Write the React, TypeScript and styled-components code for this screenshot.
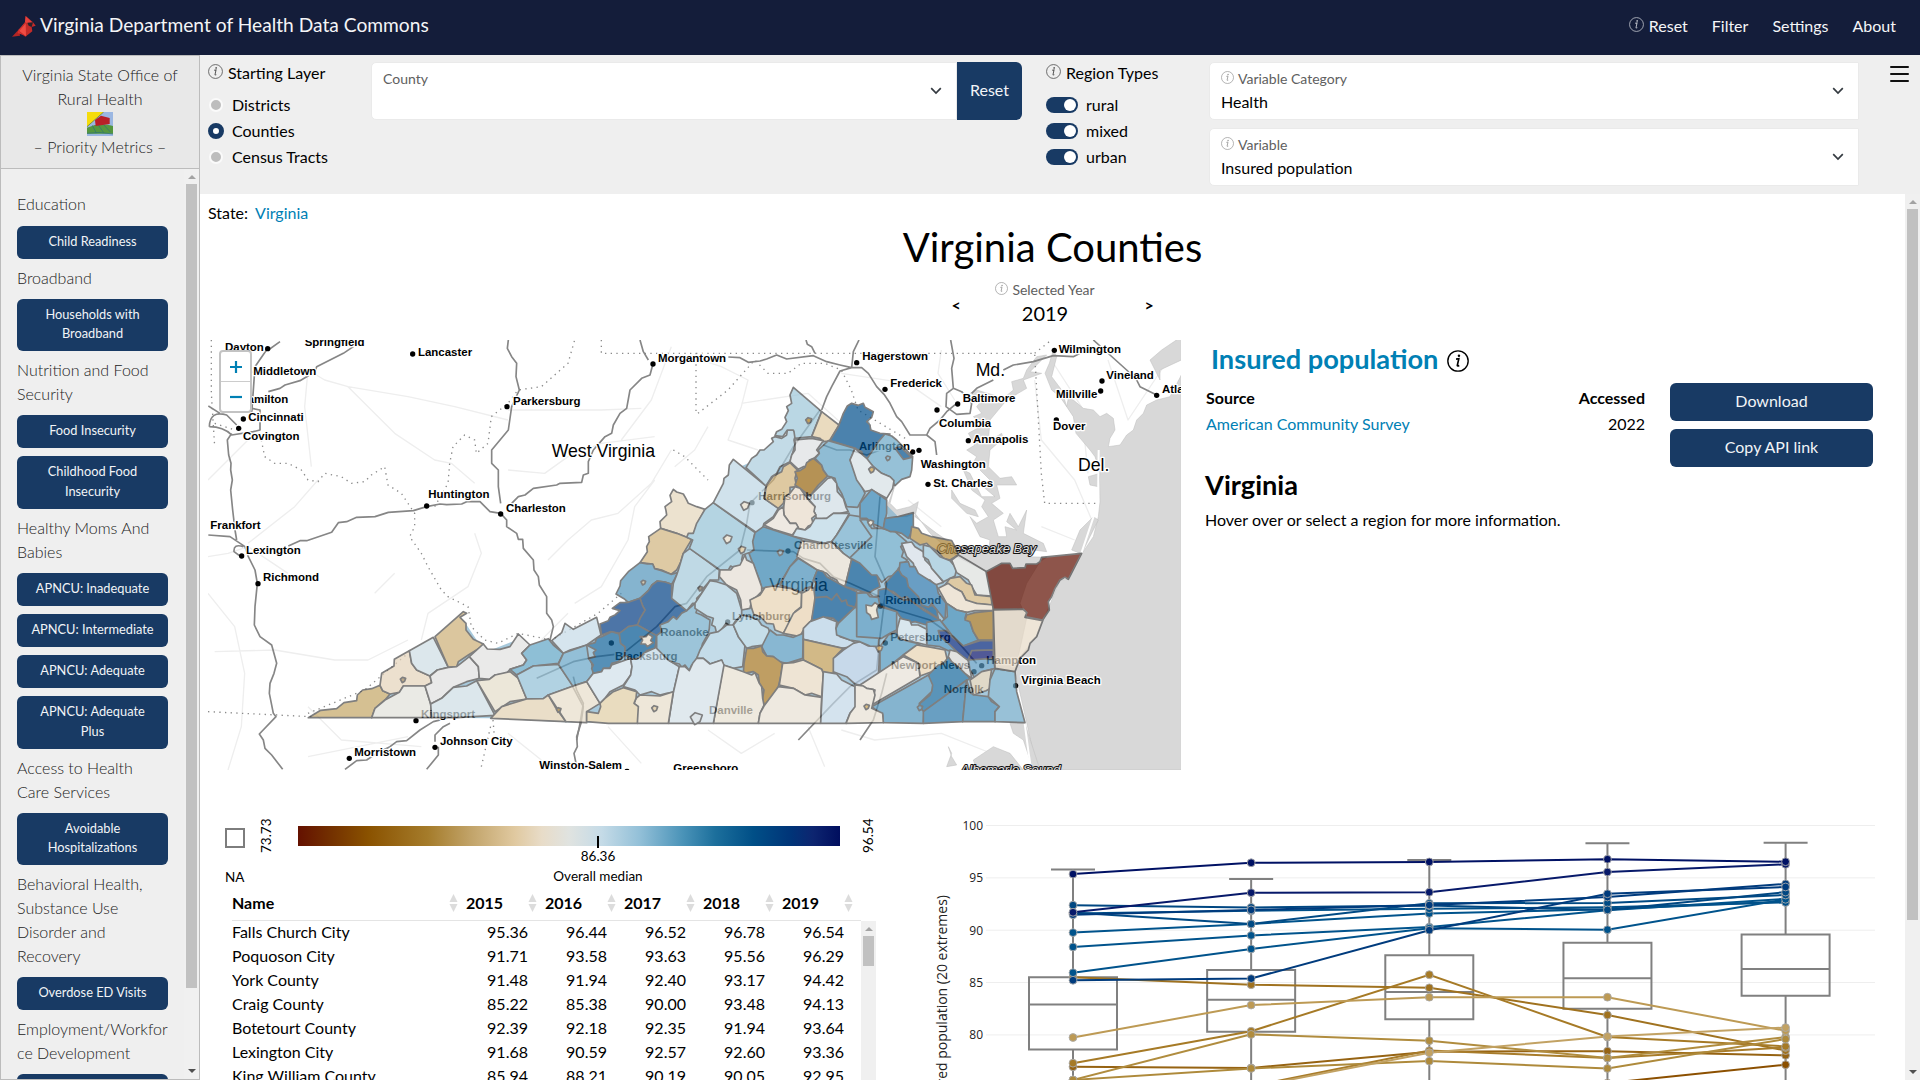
import React from "react";
import styled, { createGlobalStyle, css } from "styled-components";

const NAVY = "#141d3a";
const BLUE = "#183a64";
const LINK = "#0080b4";
const PANEL = "#efefef";

const GlobalStyle = createGlobalStyle`
  * { box-sizing: border-box; }
  html, body { margin: 0; padding: 0; height: 1080px; overflow: hidden; background: #fff; }
  body { font-family: Lato, "Liberation Sans", sans-serif; font-size: 16px; line-height: 24px; color: #000; }
`;

const Page = styled.div`
  display: flex;
  flex-direction: column;
  width: 1920px;
  height: 1080px;
  overflow: hidden;
`;

/* ---------- top bar ---------- */
const TopBar = styled.header`
  display: flex;
  align-items: center;
  justify-content: space-between;
  flex: none;
  height: 55px;
  padding: 0 24px 6px 11px;
  background: ${NAVY};
  color: #f4f5f7;
`;
const Brand = styled.div`
  display: flex;
  align-items: center;
  gap: 4px;
  font-size: 19.2px;
  svg { margin-top: 2px; }
`;
const Nav = styled.nav`
  display: flex;
  align-items: center;
  gap: 24px;
  padding-top: 2px;
`;
const NavItem = styled.span`
  display: flex;
  align-items: center;
  gap: 5px;
`;

/* ---------- sidebar ---------- */
const Columns = styled.div`
  display: flex;
  flex: 1;
  min-height: 0;
`;
const Sidebar = styled.aside`
  display: flex;
  flex-direction: column;
  flex: none;
  width: 200px;
  border: 1px solid #bcbcbc;
  background: ${PANEL};
`;
const SideTitle = styled.div`
  display: flex;
  flex-direction: column;
  align-items: center;
  flex: none;
  height: 113px;
  padding-top: 7px;
  border-bottom: 1px solid #bcbcbc;
  background: #e8e8e8;
  font-weight: 300;
  text-align: center;
  color: #222;
  svg { margin: 1px 0 -1px; }
`;
const SideBody = styled.div`
  display: flex;
  flex: 1;
  min-height: 0;
`;
const MetricList = styled.div`
  display: flex;
  flex-direction: column;
  flex: 1;
  gap: 8px;
  min-height: 0;
  overflow: hidden;
  padding: 24.6px 17px 0 16px;
`;
const MetricHeading = styled.div`
  flex: none;
  width: 151px;
  margin: -1.2px 0 1.2px;
  font-weight: 300;
  color: #222;
  overflow-wrap: anywhere;
`;
const MetricButton = styled.button`
  flex: none;
  width: 151px;
  padding: 6px 12px 8px;
  border: 0;
  border-radius: 6px;
  background: ${BLUE};
  color: #f1f4f7;
  font: 400 12.8px/19.2px Lato, sans-serif;
  text-align: center;
`;

/* ---------- scrollbar ---------- */
const Track = styled.div`
  display: flex;
  flex-direction: column;
  align-items: center;
  justify-content: space-between;
  flex: none;
  width: 15px;
  background: #f0f0f0;
`;
const Thumb = styled.div<{ $h: number }>`
  width: 11px;
  height: ${(p) => p.$h}px;
  background: #c1c1c1;
`;
const ThumbStack = styled.div`
  display: flex;
  flex-direction: column;
  align-items: center;
`;
const Arrow = styled.i<{ $down?: boolean }>`
  width: 0;
  height: 0;
  margin: ${(p) => (p.$down ? "0 0 6px" : "6px 0 5px")};
  border: 4px solid transparent;
  ${(p) =>
    p.$down
      ? css`border-top-color: #505050; border-bottom: 0;`
      : css`border-bottom-color: #a3a3a3; border-top: 0;`}
`;
function Scrollbar({ thumb, down = true }: { thumb: number; down?: boolean }) {
  return (
    <Track>
      <ThumbStack>
        <Arrow />
        <Thumb $h={thumb} />
      </ThumbStack>
      {down && <Arrow $down />}
    </Track>
  );
}

/* ---------- filter bar ---------- */
const Main = styled.main`
  display: flex;
  flex-direction: column;
  flex: 1;
  min-width: 0;
`;
const FilterBar = styled.section`
  display: flex;
  align-items: flex-start;
  flex: none;
  height: 139px;
  padding: 7px 11px 0 8px;
  background: ${PANEL};
`;
const OptionGroup = styled.div<{ $w: number }>`
  display: flex;
  flex-direction: column;
  gap: 2px;
  width: ${(p) => p.$w}px;
  margin-top: -1px;
`;
const GroupLabel = styled.div`
  display: flex;
  align-items: center;
  gap: 5px;
  height: 24px;
  margin-bottom: 6px;
`;
const OptionRow = styled.div`
  display: flex;
  align-items: center;
  gap: 8px;
  height: 24px;
`;
const Radio = styled.span<{ $on?: boolean }>`
  width: 16px;
  height: 16px;
  border-radius: 50%;
  border: ${(p) => (p.$on ? `5px solid ${BLUE}` : "3px solid #fafafa")};
  background: ${(p) => (p.$on ? "#fff" : "#bdbdbd")};
  ${(p) => !p.$on && css`width: 14px; height: 14px; border-width: 2px; margin: 0 1px;`}
`;
const Switch = styled.span`
  display: flex;
  align-items: center;
  justify-content: flex-end;
  width: 32px;
  height: 16px;
  padding-right: 2px;
  border-radius: 8px;
  background: ${BLUE};
  &::after {
    content: "";
    width: 12px;
    height: 12px;
    border-radius: 50%;
    background: #fff;
  }
`;
const SelectBox = styled.div<{ $w: number }>`
  display: flex;
  align-items: center;
  justify-content: space-between;
  width: ${(p) => p.$w}px;
  height: 58px;
  padding: 0 14px 0 11px;
  border: 1px solid #eaeaea;
  border-radius: 5px 0 0 5px;
  background: #fff;
`;
const SelectText = styled.div`
  display: flex;
  flex-direction: column;
  height: 46px;
`;
const SelectLabel = styled.div`
  display: flex;
  align-items: center;
  gap: 4px;
  height: 22px;
  font-size: 14px;
  color: #606060;
`;
const ResetButton = styled.button`
  width: 65px;
  height: 58px;
  padding: 0 0 3px;
  border: 0;
  border-radius: 0 6px 6px 0;
  background: ${BLUE};
  color: #f1f4f7;
  font: 400 16px Lato, sans-serif;
  margin-right: 24px;
`;
const SelectStack = styled.div`
  display: flex;
  flex-direction: column;
  gap: 8px;
  flex: 1;
`;
const MenuButton = styled.div`
  display: flex;
  flex-direction: column;
  gap: 5px;
  margin-top: 4px;
  span { width: 19px; height: 2px; background: #111; border-radius: 1px; }
`;

/* ---------- content ---------- */
const ContentRow = styled.div`
  display: flex;
  flex: 1;
  min-height: 0;
`;
const Content = styled.div`
  display: flex;
  flex-direction: column;
  flex: 1;
  min-width: 0;
  overflow: hidden;
  padding: 7px 32px 0 8px;
`;
const Crumb = styled.div`
  display: flex;
  gap: 7px;
  a { color: ${LINK}; }
`;
const Title = styled.h1`
  margin: -1px 0 1px;
  height: 46px;
  padding-left: 24px;
  font: 400 40px/46px Lato, sans-serif;
  text-align: center;
`;
const YearPicker = styled.div`
  display: flex;
  align-items: center;
  justify-content: center;
  height: 69px;
  padding-left: 24px;
  b { font-weight: 700; font-size: 16px; padding-bottom: 1px; width: 9px; text-align: center; }
`;
const YearValue = styled.div`
  display: flex;
  flex-direction: column;
  align-items: center;
  width: 184px;
  height: 50px;
  padding-right: 15px;
  margin-top: -3px;
  font-size: 20px;
`;
const UpperRow = styled.div`
  display: flex;
  gap: 25px;
  height: 430px;
`;
const MapFrame = styled.div`
  position: relative;
  flex: none;
  width: 973px;
  height: 430px;
  overflow: hidden;
  background: #fff;
  svg { display: block; }
`;
const ZoomControl = styled.div`
  position: absolute;
  left: 11px;
  top: 10px;
  display: flex;
  flex-direction: column;
  width: 33px;
  height: 63px;
  border: 2px solid #c3c3c3;
  border-radius: 4px;
  background: #fff;
`;
const ZoomButton = styled.span`
  display: flex;
  flex: 1;
  align-items: center;
  justify-content: center;
  & + & { border-top: 1px solid #ccc; }
`;
const Details = styled.div`
  display: flex;
  flex-direction: column;
  flex: 1;
`;
const MetricTitle = styled.h2`
  display: flex;
  align-items: center;
  gap: 9px;
  margin: -1px 0 3px 5px;
  height: 40px;
  font: 700 27.2px/40px Lato, sans-serif;
  color: ${LINK};
`;
const SourceRow = styled.div`
  display: flex;
  justify-content: space-between;
`;
const SourceTable = styled.div`
  display: grid;
  grid-template-columns: 1fr auto;
  width: 439px;
  height: 60px;
  grid-template-rows: 26px 26px;
  padding-top: 4px;
  b { font-weight: 700; }
  a { color: ${LINK}; }
  span { text-align: right; }
`;
const ActionStack = styled.div`
  display: flex;
  flex-direction: column;
  gap: 8px;
  width: 203px;
  margin-top: 1px;
`;
const ActionButton = styled.button`
  height: 38px;
  padding: 0 0 3px;
  border: 0;
  border-radius: 6px;
  background: ${BLUE};
  color: #f1f4f7;
  font: 400 16px Lato, sans-serif;
`;
const RegionName = styled.h3`
  margin: 0 0 5px -1px;
  height: 36px;
  font: 700 27.2px/36px Lato, sans-serif;
`;
const RegionHint = styled.div`
  margin-left: -1px;
`;
const LowerRow = styled.div`
  display: flex;
  flex: 1;
  min-height: 0;
  gap: 46px;
  padding-top: 40px;
`;
const LeftPane = styled.div`
  display: flex;
  flex-direction: column;
  width: 668px;
`;
const Legend = styled.div`
  display: flex;
  flex: none;
  height: 76px;
  padding: 0 0 0 17px;
  font-size: 13.5px;
  line-height: 20px;
`;
const NaKey = styled.div`
  display: flex;
  flex-direction: column;
  justify-content: space-between;
  flex: none;
  width: 31px;
  height: 77px;
  padding-top: 18px;
  i { width: 20px; height: 20px; border: 2px solid #7d7d7d; }
`;
const Bound = styled.div<{ $gap?: number }>`
  flex: none;
  width: 20px;
  height: 52px;
  margin-left: ${(p) => p.$gap ?? 0}px;
  writing-mode: vertical-rl;
  transform: rotate(180deg);
  text-align: center;
  line-height: 20px;
`;
const Scale = styled.div`
  display: flex;
  flex-direction: column;
  flex: none;
  width: 542px;
  margin-left: 22px;
  padding-top: 16px;
`;
const Ramp = styled.div`
  display: flex;
  flex: none;
  height: 20px;
  background: linear-gradient(90deg, #641100 0%, #733000 6%, #8a5200 13%, #a57c2b 24%, #c2a46a 32%, #e0c9a0 40%, #e8dcc8 45%, #e0e3e0 50%, #c5dbe7 56%, #93c0d8 63%, #4a93b8 71%, #1c6f9c 77%, #004f87 84%, #003478 91%, #0d2570 95%, #000e5e 100%);
`;
const Median = styled.div`
  display: flex;
  flex-direction: column;
  align-items: center;
  width: 120px;
  margin: -10px 0 0 240px;
  i { flex: none; width: 2px; height: 12px; background: #000; }
  span { flex: none; height: 20px; line-height: 17px; }
`;
const TableRow = styled.div<{ $head?: boolean }>`
  display: grid;
  grid-template-columns: 226px repeat(5, 79px);
  width: 629px;
  height: 24px;
  flex: none;
  align-items: center;
  ${(p) => p.$head && css`height: 35px; margin-left: 24px; border-bottom: 1px solid #e4e4e4; font-weight: 700;`}
`;
const HeadCell = styled.div`
  display: flex;
  justify-content: space-between;
  align-items: center;
  padding: 0 0 0 8px;
  &:first-child { padding-left: 0; }
`;
const TableBody = styled.div`
  display: flex;
  flex: 1;
  min-height: 0;
  margin-left: 24px;
  overflow: hidden;
`;
const Rows = styled.div`
  display: flex;
  flex-direction: column;
  width: 629px;
  margin-top: -1px;
  overflow: hidden;
`;
const NumCell = styled.div`
  padding-right: 9px;
  text-align: right;
`;
const ChartPane = styled.div`
  width: 960px;
  height: 270px;
  svg { display: block; }
`;

/* ---------- icons ---------- */
function Info({ size = 14, color = "#555", w = 0.9 }: { size?: number; color?: string; w?: number }) {
  return (
    <svg width={size} height={size} viewBox="0 0 16 16" style={{ marginTop: size < 20 ? -3 : 3 }}>
      <circle cx="8" cy="8" r="7.4" fill="none" stroke={color} strokeWidth={w} />
      <path d="M6.6 6.6 8.6 6.3 7.5 11.2Q7.4 12 8.9 11.3" fill="none" stroke={color} strokeWidth={w * 1.2} />
      <circle cx="8.7" cy="4.2" r=".9" fill={color} />
    </svg>
  );
}
const Chevron = () => (
  <svg width="12" height="8" viewBox="0 0 12 8">
    <path d="M1.2 1.2 6 6 10.8 1.2" fill="none" stroke="#343a40" strokeWidth="1.7" />
  </svg>
);
const Cardinal = () => (
  <svg width="25" height="22" viewBox="0 0 75 66">
    <path d="M3 65 24 43 27 62Z" fill="#b32523" />
    <path d="M24 43 42 22 46 64 20 54Z" fill="#d93330" />
    <path d="M44 3 66 22 74 32 62 36 64 49 43 65 24 50 42 22Z" fill="#c42b29" />
    <path d="M44 3 64 23 50 25 42 22Z" fill="#e8413c" />
    <path d="M44 25 45 64 25 48Z" fill="#ef4c43" />
    <path d="M49 23 66 22 62 36 53 32Z" fill="#26232d" />
  </svg>
);
const Barn = () => (
  <svg width="26" height="24" viewBox="0 0 78 72">
    <rect width="78" height="72" fill="#9bb7e2" />
    <path d="M0 0H50L0 44Z" fill="#f5dc0c" />
    <path d="M0 44 50 0" stroke="#55713f" strokeWidth="2" />
    <path d="M0 47Q40 30 78 42V65H0Z" fill="#55973f" />
    <path d="M0 64Q38 58 78 66M16 40 28 63M32 36 50 62M50 38 70 60" stroke="#2c7078" strokeWidth="2" fill="none" />
    <path d="M24 24 42 11 68 18V36L26 42Z" fill="#b91f28" />
  </svg>
);
const Sort = () => (
  <svg width="9" height="18" viewBox="0 0 9 18">
    <path d="M4.5 0 8.5 8H.5ZM4.5 18 .5 10H8.5Z" fill="#dcdcdc" />
  </svg>
);

/* ---------- map data ---------- */
// Each tile carries its own origin; coordinates are three units per pixel.
type Shape = [string, string];
const WEST: Shape[] = [
  ["#d6c193", "325,1163 362,1141 410,1136 432,1118 470,1112 472,1095 488,1080 515,1076 540,1066 548,1082 570,1092 555,1110 525,1135 515,1163"],
  ["#ede0cf", "540,1066 545,1030 582,1008 583,988 604,976 628,962 635,1000 650,1020 690,1038 695,1058 675,1068 610,1068 598,1087 570,1092 548,1082"],
  ["#ebebe6", "515,1163 525,1135 555,1110 598,1087 610,1068 675,1068 692,1122 695,1163"],
  ["#dde8ec", "628,962 700,922 745,1012 712,1020 690,1038 650,1020 635,1000"],
  ["#dbc79f", "705,920 790,845 800,850 780,862 798,880 798,900 820,928 850,942 838,955 805,975 775,995 770,1010 745,1012"],
  ["#eaeae9", "690,1038 712,1020 745,1012 770,1010 808,980 835,1010 838,1045 800,1055 760,1072 740,1090 725,1105 692,1122 675,1068 695,1058"],
  ["#ebebea", "808,980 850,942 862,957 900,958 930,950 955,912 990,945 965,970 980,990 970,1005 930,1018 920,1030 885,1035 868,1048 838,1045 835,1010"],
  ["#dde8ec", "692,1122 725,1105 760,1072 800,1068 830,1052 885,1156 770,1163 695,1163"],
  ["#ede7da", "830,1052 868,1048 885,1035 930,1025 955,1045 980,1107 930,1115 885,1145"],
  ["#8fbfd7", "990,945 1045,926 1060,945 1090,970 1075,1000 1000,1008 950,1035 930,1018 970,1005 980,990 965,970"],
  ["#b2d3e3", "950,1035 1000,1008 1075,1003 1120,1068 1045,1095 1030,1106 980,1107"],
  ["#d7e6ee", "1055,932 1085,908 1095,880 1120,898 1155,880 1190,862 1203,915 1160,945 1110,960 1090,970"],
  ["#94c0d8", "1090,970 1160,945 1165,980 1175,1000 1180,1030 1160,1055 1118,1068 1075,1003"],
  ["#ebdfc9", "872,1165 905,1130 980,1107 1030,1106 1045,1095 1065,1130 1098,1175"],
  ["#efe8da", "1045,1095 1120,1068 1160,1055 1200,1120 1160,1145 1160,1178 1098,1175"],
];
const MID: Shape[] = [
  ["#ede2d0", "340,358 350,366 370,372 378,386 385,400 410,410 435,418 415,455 410,470 400,490 380,502 350,490 302,475 300,455 320,435 318,422 315,410 335,395 330,376"],
  ["#dfcba5", "302,475 350,490 380,502 395,508 370,550 362,576 350,600 333,613 305,600 284,596 278,582 240,578 262,545 260,530 268,515 266,500"],
  ["#86b5d0", "240,578 262,582 278,582 284,596 305,602 333,613 353,608 345,625 335,643 315,636 292,633 276,645 265,662 240,685 225,690 205,697 192,686 168,672 180,648 182,632 205,605"],
  ["#4d7aaa", "240,685 265,662 276,645 292,633 315,636 335,643 335,685 380,722 365,730 362,745 350,748 340,740 325,755 300,765 305,785 290,797 250,775 232,765 240,745 255,720 248,708"],
  ["#4e76a8", "120,762 145,752 150,742 165,735 180,722 157,715 180,698 205,697 240,685 248,708 255,720 240,745 232,765 205,770 180,790 150,785 125,795"],
  ["#5891b8", "80,825 105,818 110,805 125,800 155,785 178,792 182,820 195,830 195,855 175,875 155,880 150,895 130,895 125,905 100,910 95,895 100,885 95,878 85,865 105,860 100,848 108,840"],
  ["#4b88b2", "178,790 205,770 232,765 290,797 285,835 260,842 250,855 235,865 215,868 195,855 195,830 182,820"],
  ["#efe8da", "240,800 258,800 265,792 278,800 272,812 280,818 262,830 256,822 242,822 248,810"],
  ["#dfe9f1", "80,935 100,910 125,905 130,895 150,895 155,885 212,865 216,890 212,915 190,945 160,960 150,965 135,985 120,1000"],
  ["#d5e5ee", "212,868 235,865 250,850 290,832 325,870 358,890 340,968 320,970 300,975 275,965 240,975 225,960 190,950 212,915 216,890"],
  ["#9dc5d9", "290,797 305,785 300,765 325,755 340,740 350,748 365,730 380,722 405,700 412,715 408,728 425,735 450,750 448,775 445,790 428,820 420,850 410,865 415,880 395,885 388,902 375,885 365,892 358,882 340,878 325,870 290,835"],
  ["#bfdae6", "390,535 478,600 476,630 450,630 445,638 430,655 425,670 410,685 412,700 398,700 380,722 335,685 340,640 350,615 355,600 370,550"],
  ["#b5d4e3", "460,398 585,488 580,515 585,535 575,545 548,555 545,570 550,580 530,598 512,588 505,600 480,600 388,535 398,510 380,502 385,490 400,490 410,460 435,418"],
  ["#d1e3ec", "460,398 490,340 492,325 505,315 508,285 520,268 618,348 612,385 655,415 640,440 612,460 608,475 590,488 520,440"],
  ["#c4dce8", "558,293 575,265 590,255 600,240 612,240 640,215 635,205 645,200 665,205 680,195 682,180 700,180 708,190 702,210 705,225 690,275 660,290 650,310 635,320 618,348"],
  ["#bbd8e5", "700,52 785,125 755,200 705,205 702,185 700,180 682,180 668,200 645,197 650,185 665,178 680,155 675,142 685,122 680,110 695,100 690,75"],
  ["#ebdbc0", "785,125 837,165 808,213 790,215 780,205 755,200"],
  ["#e7eaeb", "705,210 755,205 790,212 770,240 778,250 762,265 748,270 745,290 730,290 715,298 690,275 695,255 705,240"],
  ["#dfcaa2", "690,278 712,300 705,325 710,350 690,352 690,370 675,380 670,400 655,415 612,385 620,345 640,318 665,305 670,290"],
  ["#b69356", "705,305 720,302 735,292 740,278 760,265 785,285 790,300 803,318 775,345 750,378 720,355 705,345 712,325"],
  ["#4b83ae", "875,100 895,106 910,100 915,112 940,125 935,142 920,155 930,165 932,180 960,190 990,192 920,268 910,262 905,245 885,235 810,212 835,170 850,130 862,108"],
  ["#90bdd5", "805,212 885,235 870,270 915,370 893,412 860,410 845,370 830,345 825,325 803,318 790,300 785,285 765,265 778,250 775,240"],
  ["#dfe8ed", "815,322 830,340 832,365 850,385 858,412 865,425 840,430 820,430 800,445 770,448 765,430 760,420 765,410 735,375 750,378 803,325"],
  ["#efe6da", "705,350 720,355 750,395 765,410 762,425 768,435 755,445 760,462 745,468 735,480 715,475 708,460 690,460 672,435 670,420 675,380 690,370"],
  ["#eeeae3", "612,465 640,445 655,420 670,410 672,435 690,460 708,460 715,472 697,495 640,478"],
  ["#cfe2ec", "710,475 735,480 750,470 765,445 800,445 820,430 868,430 830,495 815,515 790,520 697,498"],
  ["#9ac4da", "868,435 900,440 915,450 940,455 942,470 960,480 900,563 870,565 850,550 815,515 830,495"],
  ["#72a9c8", "610,470 725,508 715,560 690,590 660,640 640,650 605,655 600,635 590,610 567,550 582,540 578,515 585,488"],
  ["#7fb1cd", "715,565 772,600 762,625 755,650 735,655 725,667 660,645 690,590"],
  ["#ece8df", "725,512 790,520 815,515 850,550 875,568 855,650 840,648 830,630 810,620 800,610 772,600 710,560"],
  ["#ece8e0", "555,555 560,570 580,580 605,650 605,665 590,680 575,690 570,715 545,720 542,690 530,660 500,645 478,620 480,600 512,600 520,590 540,585"],
  ["#c9dfe9", "450,632 470,635 500,645 530,670 545,720 545,735 525,755 515,770 498,760 480,785 470,790 465,770 455,765 460,745 440,738 405,715 405,700 415,685 425,670"],
  ["#eee1ca", "570,690 600,675 615,652 640,648 690,655 725,670 724,710 705,725 690,760 670,790 645,780 640,762 620,760 600,740 582,735 575,715"],
  ["#eedfc8", "725,670 745,660 750,652 765,655 768,690 755,750 730,780 720,800 670,790 700,730 724,712"],
  ["#4a84ae", "772,600 790,605 800,620 835,640 855,650 890,665 892,690 885,712 862,705 858,690 845,695 830,672 815,690 800,680 765,685 762,660 768,640 760,630"],
  ["#4784af", "765,683 800,680 815,690 830,672 845,695 858,690 862,705 885,712 855,740 835,760 820,745 800,742 780,750 755,750"],
  ["#4a86b0", "875,568 890,575 905,575 925,600 940,600 950,612 960,650 940,660 925,670 855,650"],
  ["#c5dde9", "450,790 475,785 500,765 520,765 535,800 555,825 548,890 520,895 490,885 485,870 450,882 430,865 410,865 420,840"],
  ["#c6dfea", "520,765 545,735 570,740 595,750 605,765 625,775 630,790 610,825 575,830 560,835 535,800"],
  ["#89b8d3", "630,780 650,795 670,795 700,802 730,790 728,865 680,880 655,875 640,860 620,858 605,830"],
  ["#ccdfec", "730,775 750,755 790,740 830,755 828,775 840,800 870,810 890,820 880,830 845,835 730,808"],
  ["#bf9f64", "560,835 580,835 605,828 608,845 620,858 640,860 668,880 662,920 655,950 635,980 612,1008 608,985 612,960 598,940 595,915 580,905 550,910 552,880"],
  ["#d2ba88", "730,808 850,835 835,850 822,865 824,890 820,910 790,910 785,898 730,870"],
  ["#efe5d4", "668,880 700,878 730,870 760,885 785,898 790,910 785,980 755,970 735,975 700,955 658,945"],
  ["#eee9df", "490,885 520,895 550,905 575,915 585,908 598,940 605,950 608,985 612,1005 600,1030 595,1060 460,1060"],
  ["#eeeae0", "595,1060 600,1030 612,1008 655,950 700,955 735,975 785,982 782,1060"],
  ["#e1e9ef", "358,890 375,890 388,902 398,880 410,865 430,865 450,882 485,870 492,885 460,1060 325,1060 340,968"],
  ["#d4e4ee", "790,905 830,912 845,930 885,950 888,1010 870,1030 858,1060 782,1060"],
  ["#c8daeb", "820,865 850,840 880,820 900,815 925,828 960,830 955,918 925,935 900,945 885,942 860,920 820,905"],
  ["#8fbdd6", "835,760 885,712 905,720 920,738 960,745 955,830 930,828 900,815 870,810 830,795 828,775"],
  ["#8bb9d3", "892,670 925,668 940,680 960,680 958,710 940,705 895,710"],
  ["#efe8da", "240,975 300,978 340,965 325,1060 232,1060 230,1030 235,1010 222,1000 228,985"],
  ["#e9ddc0", "80,1025 115,1030 122,1010 120,1000 135,985 160,965 190,953 230,965 228,985 222,1000 235,1010 232,1060 145,1060 80,1055"],
];
const EAST: Shape[] = [
  ["#97c2d8", "55,215 75,192 95,198 110,210 158,260 155,300 150,320 125,328 105,347 90,320 65,310 40,290 20,268"],
  ["#e3e9ed", "-15,235 20,265 40,290 65,310 90,320 102,332 98,355 80,385 35,360 15,365 -10,330 -30,270"],
  ["#6ea7c9", "0,400 35,358 80,390 80,430 70,475 40,462 20,445 0,445"],
  ["#92bfd7", "0,450 20,448 35,475 65,475 105,485 140,515 122,530 130,545 125,560 142,570 115,595 110,615 85,620 65,637 50,615 35,615 0,580 -30,563 35,500"],
  ["#5b96bc", "75,445 115,440 160,428 160,475 145,505 125,490 105,485 92,485 70,475"],
  ["#cbb07a", "155,470 175,475 185,490 215,500 275,512 285,530 295,555 270,570 250,565 235,545 210,530 200,520 180,525 150,505"],
  ["#e1e8ef", "125,520 155,516 165,530 190,545 195,570 215,590 250,637 225,645 210,630 185,625 165,600 160,580 140,560"],
  ["#b9d7e5", "190,525 210,530 240,560 270,572 290,595 285,618 250,635 215,595 205,570 190,560"],
  ["#e8e9e8", "275,570 295,555 330,575 380,605 398,678 350,675 335,650 325,630 290,608"],
  ["#6a9fc5", "120,578 145,575 150,590 165,590 175,610 230,645 235,670 258,700 255,750 235,725 215,700 205,715 185,710 175,690 150,670 140,640 115,620"],
  ["#4a86b0", "75,640 115,597 125,615 140,625 145,650 175,680 185,705 205,712 215,705 230,720 235,745 190,715 160,700 140,680 125,685 100,665 80,660"],
  ["#4a88b4", "55,660 80,655 100,670 130,690 150,690 190,720 240,750 200,765 165,755 140,760 120,740 110,725 70,710 55,710"],
  ["#7db0cd", "-10,670 20,668 30,680 55,682 60,710 110,725 110,780 90,790 65,805 -10,800"],
  ["#efe8da", "18,705 35,708 45,698 55,705 50,720 55,742 35,748 30,735 20,728"],
  ["#dfcba5", "270,625 300,620 320,640 335,645 345,675 395,680 395,705 340,700 318,690 305,665 285,655 255,645"],
  ["#efe6d8", "235,655 265,640 285,655 305,665 318,690 350,700 400,705 400,722 345,722 320,727 290,720 260,700"],
  ["#6fa8c8", "260,700 290,720 320,727 315,745 330,755 340,785 355,810 310,828 275,795 245,755 262,740"],
  ["#b99b62", "320,735 345,728 400,722 400,810 355,810 340,785 330,755 315,750"],
  ["#7baecd", "200,757 240,750 275,795 310,828 290,845 265,842 240,830 200,825"],
  ["#4a66a2", "235,782 260,782 275,800 310,828 360,812 400,812 400,840 345,842 325,870 305,865 290,845 265,820 240,800"],
  ["#525a98", "325,868 335,842 400,840 400,865 345,872"],
  ["#d9e7ef", "120,745 150,752 155,765 175,765 200,778 200,825 170,818 130,812 110,800 112,775"],
  ["#83b5d1", "60,830 85,795 110,785 115,805 150,815 180,822 130,855 60,910"],
  ["#eee0c9", "130,855 170,825 215,832 255,840 262,870 215,905 180,918 175,880"],
  ["#eeebe4", "0,945 130,860 175,880 180,920 35,1005 45,960 20,955"],
  ["#5b95ba", "205,915 235,885 250,882 265,860 290,885 330,925 190,1025 178,1010 180,1000 210,975 215,960"],
  ["#86b5d0", "35,1010 205,915 218,945 215,965 178,1000 178,1012 192,1025 190,1060 70,1058 68,1035"],
  ["#6aa0c3", "190,1025 320,930 308,1055 190,1060"],
  ["#75aaca", "320,930 332,970 345,975 385,980 395,995 418,1010 405,1025 405,1055 308,1055"],
  ["#e3e3e1", "270,840 290,845 325,872 335,925 315,910 300,895 275,875 265,860"],
  ["#8cb8d3", "325,870 400,865 405,895 370,905 345,925 330,900"],
  ["#e0d9c9", "345,920 365,905 395,898 390,930 392,955 378,962 340,975 330,930"],
  ["#99c2d8", "405,895 465,905 470,965 495,1058 405,1055 405,1025 418,1010 385,980 390,930"],
  ["#eeeae0", "-15,945 10,948 20,955 40,958 45,975 35,1015 68,1030 70,1058 -42,1060 -30,1030 -15,1010"],
  ["#8f564a", "378,605 410,588 425,580 450,580 458,595 495,593 498,582 530,582 540,575 545,562 665,550 625,628 615,622 600,630 585,655 575,680 565,695 568,720 548,750 495,740 500,728 490,718 400,718"],
  ["#efe6d8", "400,720 490,718 500,728 495,742 548,752 530,800 510,820 505,840 480,865 465,905 405,895"],
  ["#4a84ae", "105,235 120,230 155,262 130,268"],
];
const SMALL: [string, number, number, number][] = [
  ["#c39f5b", 1802, 242, 9], ["#efe8da", 1611, 498, 13], ["#efe8da", 1559, 598, 13], ["#e6d6b6", 1602, 630, 11],
  ["#a8c6d6", 1717, 638, 9], ["#d8c9ae", 1306, 728, 7], ["#a89a86", 1477, 746, 7], ["#e6d6b6", 1340, 1106, 9],
  ["#dfe6e9", 1465, 1136, 18], ["#d9b97e", 1991, 390, 9], ["#e8c890", 2014, 926, 10], ["#efe8da", 1988, 549, 9],
  ["#d9bc80", 1976, 1101, 8], ["#bba98a", 585, 1020, 8], ["#7baecd", 2136, 1104, 8], ["#b89f6c", 1052, 1110, 7],
  ["#97c2d8", 2040, 355, 7],
];
const VA_BASE =
  "320,1130 506,1055 616,950 686,910 766,840 816,915 836,935 926,900 966,930 1026,910 1076,870 1166,850 1190,868 1246,815 1256,755 1316,690 1346,590 1406,475 1486,520 1526,490 1586,385 1666,350 1746,300 1766,175 1886,255 1940,210 1980,230 2000,300 2050,320 2096,370 2050,430 2031,490 2090,550 2116,595 2236,660 2326,705 2350,810 2361,990 2415,1000 2445,1146 1100,1148 848,1135";

// Basemap roads, one path for each tile
const ROADS_WEST =
  "M203,55 165,110 155,250 M240,35 205,60 M205,185 240,175 255,165 300,152 345,125 350,110 430,70 460,50 M28,290Q30,240 80,255L110,285 M28,290Q70,290 95,315 L160,305 180,300 180,240 155,235 M25,228 60,250 M95,310 82,330 86,375 93,400 92,420 97,450 92,480 98,540 105,600 110,630 M25,615 90,620 135,650 145,680 165,720 172,760 165,830 163,885 180,920 215,945 230,1000 222,1030 210,1060 208,1090 220,1150 228,1160 178,1212 190,1230 195,1255 215,1275 248,1318 M130,650Q100,640 102,665L120,678 M265,648 300,632 320,632 395,607 415,578 440,575 470,562 525,560 565,547 640,542 680,530 720,522 740,524 785,522 800,515 840,515 870,545 902,550 M925,30 922,55 935,80 950,100 948,140 958,180 935,230 925,300 875,360 875,400 895,420 895,470 902,520 M902,550 920,570 920,590 950,610 955,628 968,628 970,655 1000,690 1002,720 1015,740 1018,765 1040,800 1040,850 1055,870 1060,890 1050,930 M935,520 955,500 975,495 1000,475 1070,465 1080,460 1145,457 1150,435 1165,430 1165,395 1180,360 1215,320 1235,310 1240,285 1260,250 1280,235 1290,180 1325,145 1350,135 1358,105 M1320,30 1330,65 1345,90 M435,1318 470,1292 500,1290 530,1270 570,1250 590,1235 620,1232 660,1200 700,1175 760,1160 M680,1318 715,1275 715,1250 M705,1235 705,1215 730,1190 750,1180 M1118,1070 1150,1130 1143,1180 1130,1220 1132,1250 1122,1270 1128,1300";
const ROADS_EAST =
  "M145,66 180,68 205,82 240,78 260,72 290,60 320,72 400,62 440,80 480,90 515,98 M378,15 382,28 395,35 405,55 M537,15 520,50 515,98 545,98 565,115 590,155 612,178 630,205 650,245 665,260 690,300 740,300 765,320 770,360 M515,98 480,108 455,155 440,185 425,225 M740,300 750,280 780,255 800,230 830,205 M812,15 822,70 815,100 820,160 M820,160 800,175 798,215 830,238 870,235 875,205 845,170Z M875,175 890,160 940,135 M970,105 1000,90 1060,80 1120,62 1180,65 1200,55 M1240,15 1290,60 1340,105 1370,135 1380,155 1430,180";
const ROADS_INNER =
  "M-70,925 40,875 110,860 190,850 290,770 345,710 380,700 440,620 540,540 560,460 570,400 640,330 700,230 780,120 M560,540 700,545 730,565 780,580 820,620 870,640 960,680 M790,225 830,240 870,240 920,255 975,235 M960,380 945,560 980,640 960,800 950,900 870,950 820,1000 715,1110 M960,700 1010,720 1110,750 1180,800 1250,880 M980,910 965,970 940,1050 900,1110 M40,920 50,960 70,1000 60,1060 50,1110";
const MINOR =
  "M40,100 300,90 350,120 420,140 600,170 740,200 900,240 M300,90 290,200 310,380 M420,140 560,280 680,360 730,370 800,430 M0,420 120,300 M900,390 1010,400 1080,350 1180,310 1340,290 M900,210 1180,210 1300,205 M120,610 260,500 330,420 M0,650 60,640 120,620 240,700 M0,760 80,860 110,1000 100,1160 60,1290 M20,935 200,930 380,960 480,960 600,900 M640,900 660,820 780,740 820,640 800,580 M500,760 560,700 M1020,660 1080,600 1150,540 1230,520 1330,430 1390,330 M1000,900 1080,820 M300,1100 400,1200 640,1220 M300,1250 600,1190 M1240,300 1330,180 1390,20 M1480,60 1540,80 1620,120 1600,200 1560,300 1650,330 M1600,190 1800,160 1900,250 M1900,100 2100,130 2200,200 M2200,30 2190,100 2240,180 M2480,120 2500,300 2600,420 2660,560 M2530,60 2620,200 2640,400 M2700,60 2760,240 2880,60 M2100,480 2200,560 M2500,560 2600,600 M1900,1170 2000,1200 2200,1180 2400,1260 M900,1180 1000,1260 M1200,1160 1300,1270 M1500,1170 1600,1240 1700,1180 M1800,1160 1850,1280 M1340,420 1280,500 1260,600 1180,740 1100,790 M1500,260 1460,330 1400,380";
const DOTTED =
  "M10,0V160 L20,320 M20,250 80,270 M160,300 170,350 200,370 240,370 280,390 300,420 330,425 350,400 400,410 430,430 470,425 490,405 530,380 540,435 580,460 620,520 620,560 605,590 640,640 660,680 700,750 720,770 780,800 790,860 830,900 870,910 900,895 930,880 1030,900 1170,820 1240,760 M680,500 720,430 725,370 735,320 770,285 800,300 805,340 840,310 850,230 900,190 930,150 1000,140 1080,70 1100,0 M1180,0V40H1464V225 M1464,40H2480 L2500,400 2510,490H2670 M1470,220 1560,150 1640,60 1680,100 1740,100 1780,70 1850,70 1900,90 1930,150 1950,210 2100,300 M0,1115 310,1130 M300,1120 470,1050 600,940 M1396,330 1430,350 1500,420 M820,1280 850,1150 M855,1140 860,1200 M2480,40 2530,0";

const LABELS: { t: string; x: number; y: number; dot?: [number, number]; size?: number }[] = [
  { t: "Dayton", x: 52, y: 33, dot: [179, 26] }, { t: "Springfield", x: 291, y: 18 },
  { t: "Lancaster", x: 631, y: 49, dot: [614, 42] }, { t: "Middletown", x: 137, y: 106 },
  { t: "Hamilton", x: 95, y: 188 }, { t: "Cincinnati", x: 122, y: 244, dot: [106, 237] },
  { t: "Covington", x: 106, y: 300, dot: [92, 265] }, { t: "Parkersburg", x: 916, y: 194, dot: [897, 200] },
  { t: "Morgantown", x: 1351, y: 66, dot: [1335, 72] }, { t: "Huntington", x: 662, y: 474, dot: [656, 498] },
  { t: "Charleston", x: 895, y: 516, dot: [878, 522] }, { t: "Frankfort", x: 8, y: 567 },
  { t: "Lexington", x: 115, y: 641, dot: [101, 648] }, { t: "Richmond", x: 166, y: 724, dot: [150, 731] },
  { t: "Kingsport", x: 640, y: 1135, dot: [624, 1142] }, { t: "Johnson City", x: 697, y: 1215, dot: [681, 1222] },
  { t: "Morristown", x: 440, y: 1249, dot: [424, 1255] }, { t: "Winston-Salem", x: 995, y: 1286, dot: [1257, 1294] },
  { t: "Greensboro", x: 1397, y: 1295 }, { t: "Blacksburg", x: 1222, y: 961, dot: [1210, 909] },
  { t: "Roanoke", x: 1358, y: 888 }, { t: "Lynchburg", x: 1573, y: 839, dot: [1559, 846] },
  { t: "Danville", x: 1504, y: 1122 }, { t: "Harrisonburg", x: 1652, y: 481, dot: [1632, 488] },
  { t: "Charlottesville", x: 1759, y: 626, dot: [1740, 633] }, { t: "Hagerstown", x: 1964, y: 61, dot: [1946, 68] },
  { t: "Frederick", x: 2048, y: 141, dot: [2031, 148] }, { t: "Baltimore", x: 2265, y: 185, dot: [2249, 192] },
  { t: "Columbia", x: 2194, y: 262, dot: [2187, 210] }, { t: "Annapolis", x: 2296, y: 309, dot: [2281, 302] },
  { t: "Arlington", x: 1954, y: 330, dot: [2114, 336] }, { t: "Washington", x: 2139, y: 383, dot: [2133, 331] },
  { t: "St. Charles", x: 2177, y: 441, dot: [2160, 433] }, { t: "Wilmington", x: 2553, y: 38, dot: [2539, 31] },
  { t: "Vineland", x: 2696, y: 117, dot: [2682, 123] }, { t: "Millville", x: 2545, y: 173, dot: [2678, 153] },
  { t: "Atlantic City", x: 2863, y: 159, dot: [2846, 166] }, { t: "Dover", x: 2536, y: 271, dot: [2545, 240] },
  { t: "Richmond", x: 2033, y: 791, dot: [2017, 799] }, { t: "Petersburg", x: 2048, y: 903, dot: [2032, 909] },
  { t: "Newport News", x: 2050, y: 988 }, { t: "Hampton", x: 2336, y: 971, dot: [2321, 977] },
  { t: "Norfolk", x: 2208, y: 1060, dot: [2298, 995] }, { t: "Virginia Beach", x: 2441, y: 1031, dot: [2423, 1037] },
  { t: "West Virginia", x: 1031, y: 351, size: 53 }, { t: "Virginia", x: 1684, y: 753, size: 53 },
  { t: "Md.", x: 2303, y: 109, size: 53 }, { t: "Del.", x: 2610, y: 394, size: 53 },
];

const MapText = styled.text`
  font-family: "Liberation Sans", Arial, sans-serif;
  font-weight: 700;
  paint-order: stroke;
  stroke: #fff;
  stroke-width: 8px;
  stroke-linejoin: round;
  fill: #000;
`;
const WaterText = styled(MapText)`
  font-style: italic;
  font-weight: 400;
  fill: #e2e2e2;
  stroke: #111;
  stroke-width: 6px;
`;

// Counties are painted opaque inside a translucent layer, so recover the source colour.
function source(hex: string) {
  const n = [1, 3, 5].map((i) => parseInt(hex.slice(i, i + 2), 16));
  return `rgb(${n.map((v) => Math.max(0, Math.round((v - 76.5) / 0.7))).join(",")})`;
}
function Counties({ shapes, x, y }: { shapes: Shape[]; x: number; y: number }) {
  return (
    <g transform={`translate(${x} ${y})`}>
      {shapes.map(([fill, points], i) => (
        <polygon key={i} points={points} fill={source(fill)} />
      ))}
    </g>
  );
}

function RegionMap() {
  return (
    <MapFrame>
      <svg width="973" height="430" viewBox="0 0 2919 1290">
        <rect width="2919" height="1290" fill="#fff" />
        <g fill="none" stroke="#eeeeee" strokeWidth="4" strokeLinejoin="round">
          <path d={MINOR} />
        </g>
        <g transform="translate(1956 90)" fill="#d8d8d8" stroke="#bdbdbd" strokeWidth="1.5">
          <path d="M964,15 930,80 890,90 860,105 850,130 830,150 820,180 800,195 780,225 745,230 750,205 765,180 760,145 740,130 720,140 700,120 670,115 640,90 625,85 620,110 640,140 648,190 690,240 705,260 718,300 720,395 715,440 700,500 665,552 625,628 600,630 565,715 530,800 480,860 465,905 480,970 505,1080 530,1200H964Z" />
          <path d="M620,110 605,60 575,20 590,-40 580,-60 568,-20 555,10 575,60 600,80Z" />
          <path d="M500,0 490,25 455,35 460,60 430,85 400,75 350,60 330,70 370,85 350,110 365,130 340,140 370,165 325,190 345,225 320,240 350,260 335,285 375,280 360,300 390,330 375,355 405,380 365,380 330,310 310,300 335,360 375,390 365,410 385,440 350,460 330,440 360,500 390,510 385,545 290,530 230,490 165,440 175,395 150,410 110,420 90,400 105,345 85,400 85,440 140,440 165,430 210,490 290,560 378,605 400,720 405,900 465,905 500,745 480,700 500,640 540,575 560,562 500,560 520,540 560,545 550,520 490,490 500,420 475,470 450,430 440,455 470,480 435,470 440,500 415,500 400,450 430,430 395,400 420,385 410,345 470,345 455,320 420,325 385,290 390,240 430,205 425,190 385,215 390,150 440,90 500,55 490,30 545,10 510,5 560,-45 530,-40Z" />
          <path d="M665,552 635,540 660,480 700,440 715,450 690,500Z M720,310 685,320 690,345 715,350Z M450,1060 495,1060 540,1200 520,1200 490,1110 460,1090Z M265,1130 275,1150 260,1190 290,1185 275,1160Z M340,1170 400,1130 450,1150 490,1200H350Z" />
          <path d="M870,-30 905,-60 964,-100V-30L900,0 900,30Z" />
          <path d="M275,360 300,400 345,420 355,440 320,430 275,385Z" />
        </g>
        <path d="M2450,1150 2462,1240 2470,1290 M2672,330 2670,490 2620,640" fill="none" stroke="#fff" strokeWidth="6" />
        <g fill="none" stroke="#8a8a8a" strokeWidth="4" strokeDasharray="4 13">
          <path d={DOTTED} />
        </g>
        <g fill="none" stroke="#868686" strokeWidth="5" strokeLinejoin="round">
          <path d={ROADS_WEST} transform="translate(-24 -30)" />
          <path d={ROADS_EAST} transform="translate(1416 -15)" />
          <path d={ROADS_INNER} transform="translate(1056 90)" />
        </g>
        {LABELS.map((l, i) => (
          <g key={i}>
            {l.dot && <circle cx={l.dot[0]} cy={l.dot[1]} r="8" />}
            <MapText x={l.x - (l.size ? 0 : 1)} y={l.y} fontSize={l.size ?? 34.4} style={l.size ? { fontWeight: 400 } : undefined}>
              {l.t}
            </MapText>
          </g>
        ))}
        <WaterText x="2187" y="639" fontSize="39">Chesapeake Bay</WaterText>
        <WaterText x="2258" y="1302" fontSize="39">Albemarle Sound</WaterText>
        <g opacity=".7" stroke="#494949" strokeWidth="5" strokeLinejoin="round">
          <polygon points={VA_BASE} fill={source("#a8cadd")} stroke="none" />
          <Counties shapes={WEST} x={-24} y={-30} />
          <Counties shapes={MID} x={1056} y={90} />
          <Counties shapes={EAST} x={1956} y={90} />
          {SMALL.map(([c, x, y, r], i) => (
            <path
              key={i}
              d={`M${x - r},${y - r * 0.3} ${x - r * 0.2},${y - r} ${x + r},${y - r * 0.6} ${x + r * 0.6},${y + r * 0.5} ${x - r * 0.3},${y + r}Z`}
              fill={source(c)}
            />
          ))}
        </g>
      </svg>
      <ZoomControl>
        <ZoomButton>
          <svg width="12" height="12"><path d="M6 0V12M0 6H12" stroke={LINK} strokeWidth="2.2" /></svg>
        </ZoomButton>
        <ZoomButton>
          <svg width="12" height="12"><path d="M0 6H12" stroke={LINK} strokeWidth="2.2" /></svg>
        </ZoomButton>
      </ZoomControl>
    </MapFrame>
  );
}

/* ---------- chart ---------- */
const SERIES: [string, number[]][] = [
  ["#8c5000", [70, 72, 74, 75.4, 77.15]],
  ["#966312", [76.95, 76.85, 78.4, 78.45, 78.05]],
  ["#a0721f", [85.5, 84.8, 84.5, 81.9, 78.5]],
  ["#a87c2a", [73, 75.1, 78.5, 77.8, 78.8]],
  ["#a67a26", [77.3, 80.35, 85.75, 79.8, 78.9]],
  ["#b08c3e", [75.7, 80.05, 79.45, 77.8, 79.8]],
  ["#ae8a3b", [75.7, 76.8, 77.5, 76.8, 79.6]],
  ["#bd9a54", [79.75, 82.85, 83.6, 83.6, 80.4]],
  ["#c2a263", [73, 75, 78.3, 79.85, 80.7]],
  ["#00538c", [88.4, 89.5, 90.3, 91.9, 93.0]],
  ["#00538c", [89.77, 90.6, 91.6, 92.0, 92.75]],
  ["#005089", [91.6, 91.85, 92.05, 92.2, 92.65]],
  ["#00538c", [85.94, 88.21, 90.19, 90.05, 92.95]],
  ["#004a84", [91.68, 90.59, 92.57, 92.6, 93.36]],
  ["#004782", [92.39, 92.18, 92.35, 91.94, 93.64]],
  ["#003b7d", [91.48, 91.94, 92.4, 93.17, 94.42]],
  ["#003b7d", [85.22, 85.38, 90.0, 93.48, 94.13]],
  ["#07196a", [91.71, 93.58, 93.63, 95.56, 96.29]],
  ["#001164", [95.36, 96.44, 96.52, 96.78, 96.54]],
];
// whisker top, upper quartile, median, lower quartile
const BOXES = [
  [95.8, 85.5, 82.9, 78.6],
  [94.9, 86.2, 83.35, 80.3],
  [96.7, 87.6, 84.1, 81.5],
  [98.3, 88.8, 85.4, 82.5],
  [98.35, 89.6, 86.3, 83.75],
];
const cx = (i: number) => 151 + i * 178.15;
const cy = (v: number) => 15.5 + (100 - v) * 10.47;

const AxisText = styled.text<{ $size: number }>`
  font-family: "Open Sans", "Noto Sans", sans-serif;
  font-size: ${(p) => p.$size}px;
  fill: #222;
`;
function Chart() {
  return (
    <ChartPane>
      <svg width="960" height="270" viewBox="0 0 960 270">
        {[100, 95, 90, 85, 80].map((v) => (
          <g key={v}>
            <path d={`M64 ${cy(v)}H953`} stroke="#eeeeee" />
            <AxisText $size={12} x="61" y={cy(v) + 4.5} textAnchor="end">{v}</AxisText>
          </g>
        ))}
        <AxisText $size={14} textAnchor="end" transform="translate(25 85) rotate(-90)">
          Insured population (20 extremes)
        </AxisText>
        <g fill="none" stroke="#808080" strokeWidth="2">
          {BOXES.map(([top, q3, med, q1], i) => (
            <path
              key={i}
              d={`M${cx(i) - 22} ${cy(top)}h44M${cx(i)} ${cy(top)}V${cy(q3)}M${cx(i) - 44} ${cy(q3)}h88V${cy(q1)}h-88ZM${cx(i) - 44} ${cy(med)}h88M${cx(i)} ${cy(q1)}V270`}
            />
          ))}
        </g>
        {SERIES.map(([color, values], s) => (
          <g key={s}>
            <polyline points={values.map((v, i) => `${cx(i)},${cy(v)}`).join(" ")} fill="none" stroke={color} strokeWidth="2" />
            {values.map((v, i) => (
              <circle key={i} cx={cx(i)} cy={cy(v)} r="3.9" fill={color} stroke="#aaa" strokeWidth=".9" />
            ))}
          </g>
        ))}
      </svg>
    </ChartPane>
  );
}

const METRICS: [string, string[]][] = [
  ["Education", ["Child Readiness"]],
  ["Broadband", ["Households with Broadband"]],
  ["Nutrition and Food Security", ["Food Insecurity", "Childhood Food Insecurity"]],
  ["Healthy Moms And Babies", ["APNCU: Inadequate", "APNCU: Intermediate", "APNCU: Adequate", "APNCU: Adequate Plus"]],
  ["Access to Health Care Services", ["Avoidable Hospitalizations"]],
  ["Behavioral Health, Substance Use Disorder and Recovery", ["Overdose ED Visits"]],
  ["Employment/Workforce Development", ["Employment"]],
];
const YEARS = ["2015", "2016", "2017", "2018", "2019"];
const DATA: [string, string[]][] = [
  ["Falls Church City", ["95.36", "96.44", "96.52", "96.78", "96.54"]],
  ["Poquoson City", ["91.71", "93.58", "93.63", "95.56", "96.29"]],
  ["York County", ["91.48", "91.94", "92.40", "93.17", "94.42"]],
  ["Craig County", ["85.22", "85.38", "90.00", "93.48", "94.13"]],
  ["Botetourt County", ["92.39", "92.18", "92.35", "91.94", "93.64"]],
  ["Lexington City", ["91.68", "90.59", "92.57", "92.60", "93.36"]],
  ["King William County", ["85.94", "88.21", "90.19", "90.05", "92.95"]],
];

export default function App() {
  return (
    <Page>
      <GlobalStyle />
      <TopBar>
        <Brand><Cardinal />Virginia Department of Health Data Commons</Brand>
        <Nav>
          <NavItem><Info size={15} color="#b9bcc6" />Reset</NavItem>
          <NavItem>Filter</NavItem>
          <NavItem>Settings</NavItem>
          <NavItem>About</NavItem>
        </Nav>
      </TopBar>
      <Columns>
        <Sidebar>
          <SideTitle>
            <span>Virginia State Office of<br />Rural Health</span>
            <Barn />
            <span>– Priority Metrics –</span>
          </SideTitle>
          <SideBody>
            <MetricList>
              {METRICS.map(([heading, buttons]) => (
                <React.Fragment key={heading}>
                  <MetricHeading>{heading}</MetricHeading>
                  {buttons.map((b) => <MetricButton key={b}>{b}</MetricButton>)}
                </React.Fragment>
              ))}
            </MetricList>
            <Scrollbar thumb={804} />
          </SideBody>
        </Sidebar>
        <Main>
          <FilterBar>
            <OptionGroup $w={163}>
              <GroupLabel><Info size={15} />Starting Layer</GroupLabel>
              <OptionRow><Radio />Districts</OptionRow>
              <OptionRow><Radio $on />Counties</OptionRow>
              <OptionRow><Radio />Census Tracts</OptionRow>
            </OptionGroup>
            <SelectBox $w={586}>
              <SelectText><SelectLabel>County</SelectLabel></SelectText>
              <Chevron />
            </SelectBox>
            <ResetButton>Reset</ResetButton>
            <OptionGroup $w={163}>
              <GroupLabel><Info size={15} />Region Types</GroupLabel>
              <OptionRow><Switch />rural</OptionRow>
              <OptionRow><Switch />mixed</OptionRow>
              <OptionRow><Switch />urban</OptionRow>
            </OptionGroup>
            <SelectStack>
              <SelectBox $w={650}>
                <SelectText><SelectLabel><Info size={13} color="#999" />Variable Category</SelectLabel>Health</SelectText>
                <Chevron />
              </SelectBox>
              <SelectBox $w={650}>
                <SelectText><SelectLabel><Info size={13} color="#999" />Variable</SelectLabel>Insured population</SelectText>
                <Chevron />
              </SelectBox>
            </SelectStack>
            <MenuButton><span /><span /><span /></MenuButton>
          </FilterBar>
          <ContentRow>
            <Content>
              <Crumb>State: <a>Virginia</a></Crumb>
              <Title>Virginia Counties</Title>
              <YearPicker>
                <b>&lt;</b>
                <YearValue>
                  <SelectLabel><Info size={13} color="#999" />Selected Year</SelectLabel>
                  2019
                </YearValue>
                <b>&gt;</b>
              </YearPicker>
              <UpperRow>
                <RegionMap />
                <Details>
                  <MetricTitle>Insured population <Info size={22} color="#000" w={1} /></MetricTitle>
                  <SourceRow>
                    <SourceTable>
                      <b>Source</b><b>Accessed</b>
                      <a>American Community Survey</a><span>2022</span>
                    </SourceTable>
                    <ActionStack>
                      <ActionButton>Download</ActionButton>
                      <ActionButton>Copy API link</ActionButton>
                    </ActionStack>
                  </SourceRow>
                  <RegionName>Virginia</RegionName>
                  <RegionHint>Hover over or select a region for more information.</RegionHint>
                </Details>
              </UpperRow>
              <LowerRow>
                <LeftPane>
                  <Legend>
                    <NaKey><i />NA</NaKey>
                    <Bound>73.73</Bound>
                    <Scale>
                      <Ramp />
                      <Median><i /><span>86.36</span><span>Overall median</span></Median>
                    </Scale>
                    <Bound $gap={18}>96.54</Bound>
                  </Legend>
                  <TableRow $head>
                    {["Name", ...YEARS].map((h) => <HeadCell key={h}>{h}<Sort /></HeadCell>)}
                  </TableRow>
                  <TableBody>
                    <Rows>
                      {DATA.map(([name, values]) => (
                        <TableRow key={name}>
                          <div>{name}</div>
                          {values.map((v, i) => <NumCell key={i}>{v}</NumCell>)}
                        </TableRow>
                      ))}
                    </Rows>
                    <Scrollbar thumb={30} down={false} />
                  </TableBody>
                </LeftPane>
                <Chart />
              </LowerRow>
            </Content>
            <Scrollbar thumb={711} />
          </ContentRow>
        </Main>
      </Columns>
    </Page>
  );
}
